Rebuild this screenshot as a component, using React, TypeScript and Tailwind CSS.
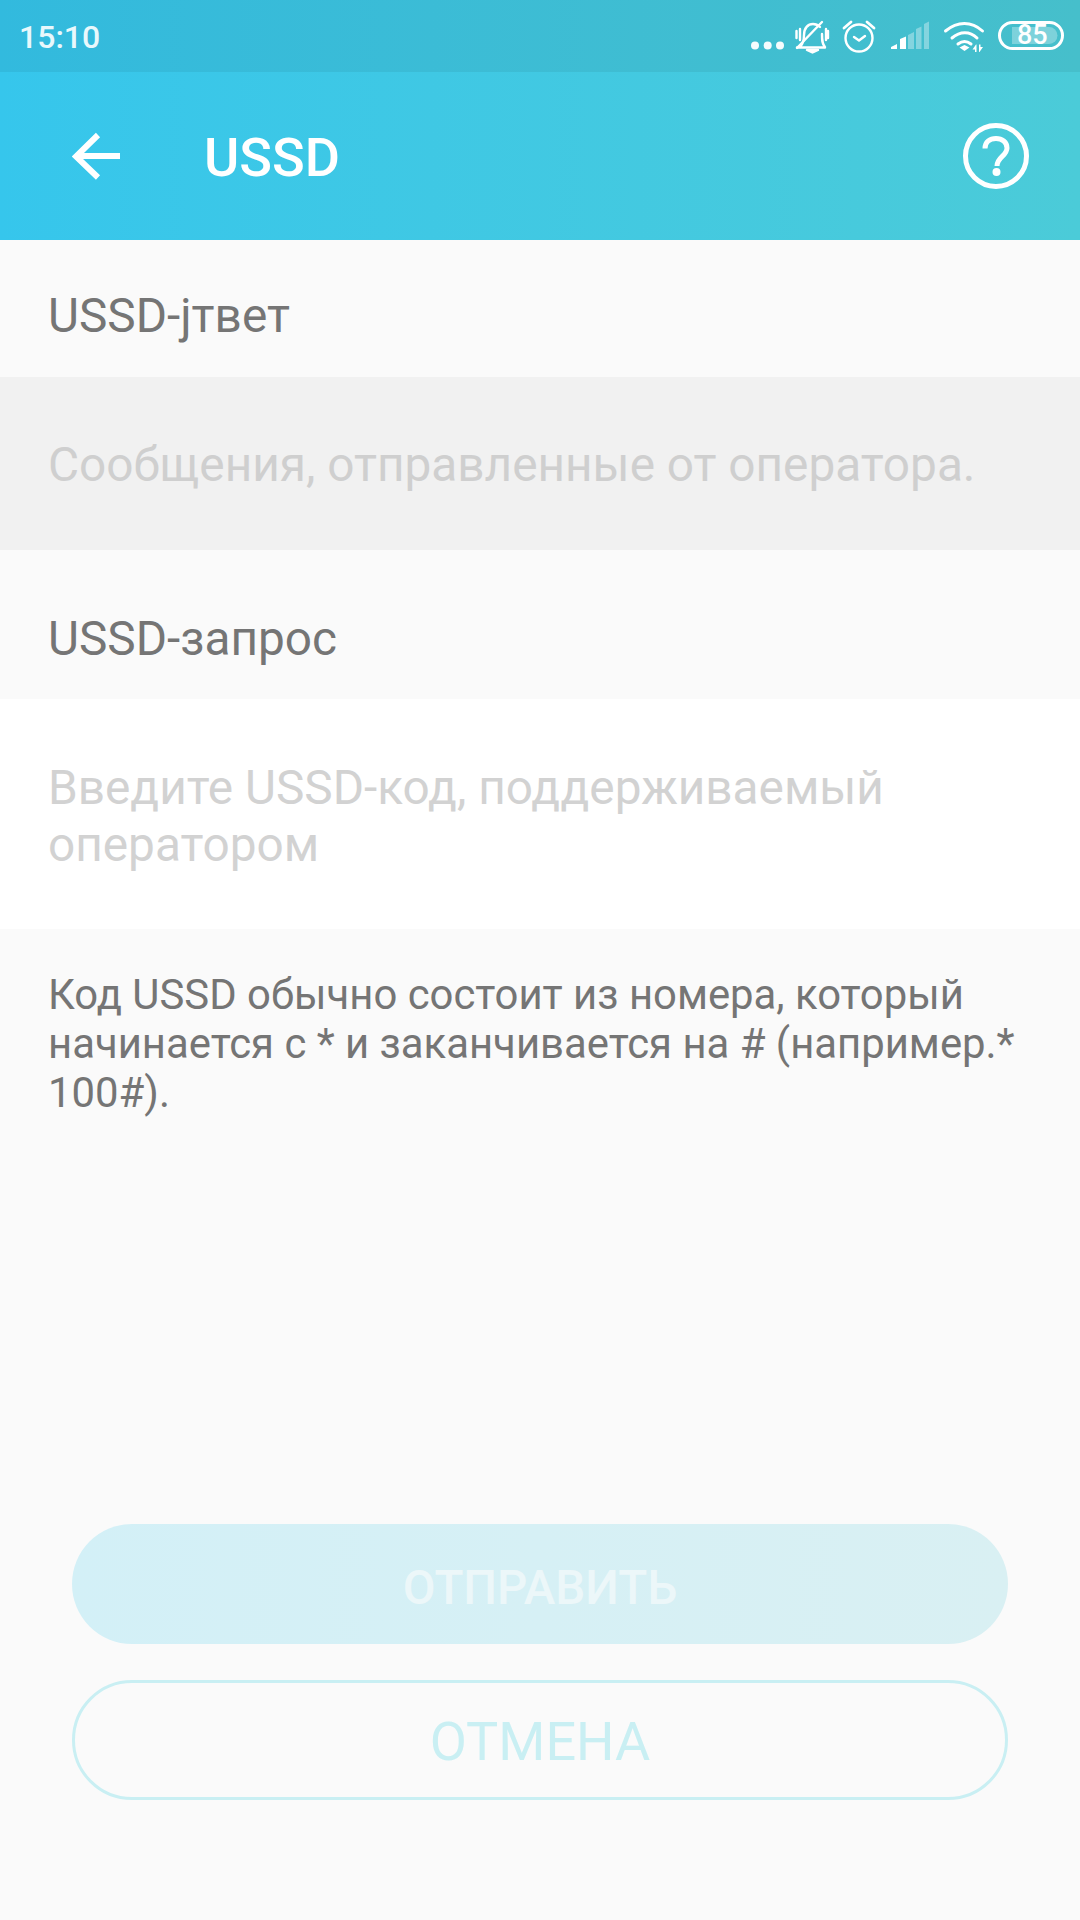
import React from "react";

function StatusIcons() {
  return (
    <svg width="360" height="70" viewBox="0 0 360 70" className="absolute right-0 top-0" fill="none">
      <g fill="#fff" fillOpacity="0.95">
        <circle cx="35" cy="45.500" r="4" />
        <circle cx="47.700" cy="45.500" r="4" />
        <circle cx="60" cy="45.500" r="4" />
      </g>
      <g stroke="#fff" strokeWidth="2.400" strokeLinecap="round" strokeLinejoin="round">
        <path d="M77 47.500h28M80 47c3-3 4-6 4-12 0-7 4-11 9-11 3 0 5 1 7 3M102 34c0 6 0 10 3 13" />
        <path d="M87 50h11l-5.500 2.500z" fill="#fff" />
        <path d="M77 48l25-26" />
        <path d="M76.500 31v7M80 29v11M106 29v11M108 31v7" />
        <circle cx="139" cy="38" r="13.500" strokeWidth="2.400" />
        <path d="M134 37l5 3.500 6-4.500" />
        <path d="M124 28l7-6M147 22l7 6" strokeWidth="2.800" />
      </g>
      <g fill="#fff">
        <path d="M171 49v-2l6-3v5zM180 49V39l6-2.500V49z" />
        <path fillOpacity="0.35" d="M188 49V35l6-3v17zM196 49V29l5.500-2.500V49zM204 49V24l5-2.500V49z" />
      </g>
      <g stroke="#fff" strokeWidth="3" strokeLinecap="round">
        <path d="M225.500 31c12-10 26-10 37 0" />
        <path d="M232 38c8-7 18-7 25 0" />
        <path d="M238 44c4-3 9-3 13 0" />
      </g>
      <path d="M239.500 47.500l5-2.500 5 2.500-5 3.500z" fill="#fff" />
      <path d="M256 44.500l-3.500 5h2.500V52h1.500V44.500zM259.500 52l3.500-5h-2.500v-2.500H259V52z" fill="#fff" />
      <rect x="279.500" y="22.500" width="63" height="26" rx="13" stroke="#fff" strokeWidth="3" />
      <path d="M292 27h37a8.500 8.500 0 0 1 0 17h-37z" fill="#fff" fillOpacity="0.3" />
    </svg>
  );
}

export default function App() {
  return (
    <div className="relative w-[1080px] h-[1920px] flex flex-col bg-[#fafafa] overflow-hidden font-['Roboto',sans-serif]">
      <div className="relative flex flex-col h-[240px] bg-gradient-to-r from-[#36c6ec] to-[#4bcbd8] text-white shrink-0">
        <div className="relative h-[72px] shrink-0 bg-black/[0.06] flex items-center pl-[19px] pt-[2px]">
          <span className="text-[32px] font-medium text-[#e8f8fc] leading-none">15:10</span>
          <StatusIcons />
          <span className="absolute left-[1017px] top-[21px] text-[27px] leading-[28px] font-medium text-white">85</span>
        </div>
        <div className="flex-1 flex items-center relative">
          <svg width="48" height="48" viewBox="0 0 48 48" fill="none" className="ml-[72px] shrink-0">
            <path d="M48 24H5M26 3L4 24.500l22 21" stroke="#fff" strokeWidth="6" />
          </svg>
          <span className="ml-[84px] text-[54px] font-medium leading-none pt-[4px]">USSD</span>
          <svg width="68" height="68" viewBox="0 0 68 68" fill="none" className="ml-auto mr-[50px]">
            <circle cx="34" cy="34" r="30.500" stroke="#fff" strokeWidth="5" />
            <path d="M23 26.500C23 19.500 28 16.500 34 16.500c6 0 11 3.500 11 9.500 0 8-10 9-10 18" stroke="#fff" strokeWidth="5" />
            <circle cx="34.500" cy="50" r="4" fill="#fff" />
          </svg>
        </div>
      </div>

      <div className="h-[137px] shrink-0 flex items-center pl-[48px] pt-[16px] text-[47.75px] text-[#757575] leading-none">USSD-jтвет</div>
      <div className="h-[173px] shrink-0 flex items-center pl-[48px] pt-[4px] bg-[#f1f1f1] text-[47.75px] text-[#cfcfcf] leading-none">
        Сообщения, отправленные от оператора.
      </div>
      <div className="h-[149px] shrink-0 flex items-center pl-[48px] pt-[30px] text-[47.75px] text-[#757575] leading-none">USSD-запрос</div>
      <div className="h-[230px] shrink-0 flex flex-col justify-center pl-[48px] pt-[6px] bg-white text-[47.75px] leading-[57px] text-[#d2d2d2]">
        <span>Введите USSD-код, поддерживаемый</span>
        <span>оператором</span>
      </div>
      <div className="pl-[48px] pr-[40px] pt-[41px] text-[41.85px] leading-[49px] text-[#757575]">
        <div>Код USSD обычно состоит из номера, который</div>
        <div>начинается с * и заканчивается на # (например.*</div>
        <div>100#).</div>
      </div>

      <div className="mt-auto mb-[120px] flex flex-col gap-[36px] px-[72px]">
        <div className="h-[120px] rounded-full bg-gradient-to-r from-[#d3f0f7] to-[#d9f0f3] flex items-center justify-center text-[47.5px] text-[#ecf7f9] font-medium leading-none pt-[10px]">
          ОТПРАВИТЬ
        </div>
        <div className="h-[120px] rounded-full border-[3px] border-[#c9eff3] flex items-center justify-center text-[54px] text-[#c9eff3] leading-none pt-[4px]">
          ОТМЕНА
        </div>
      </div>
    </div>
  );
}
